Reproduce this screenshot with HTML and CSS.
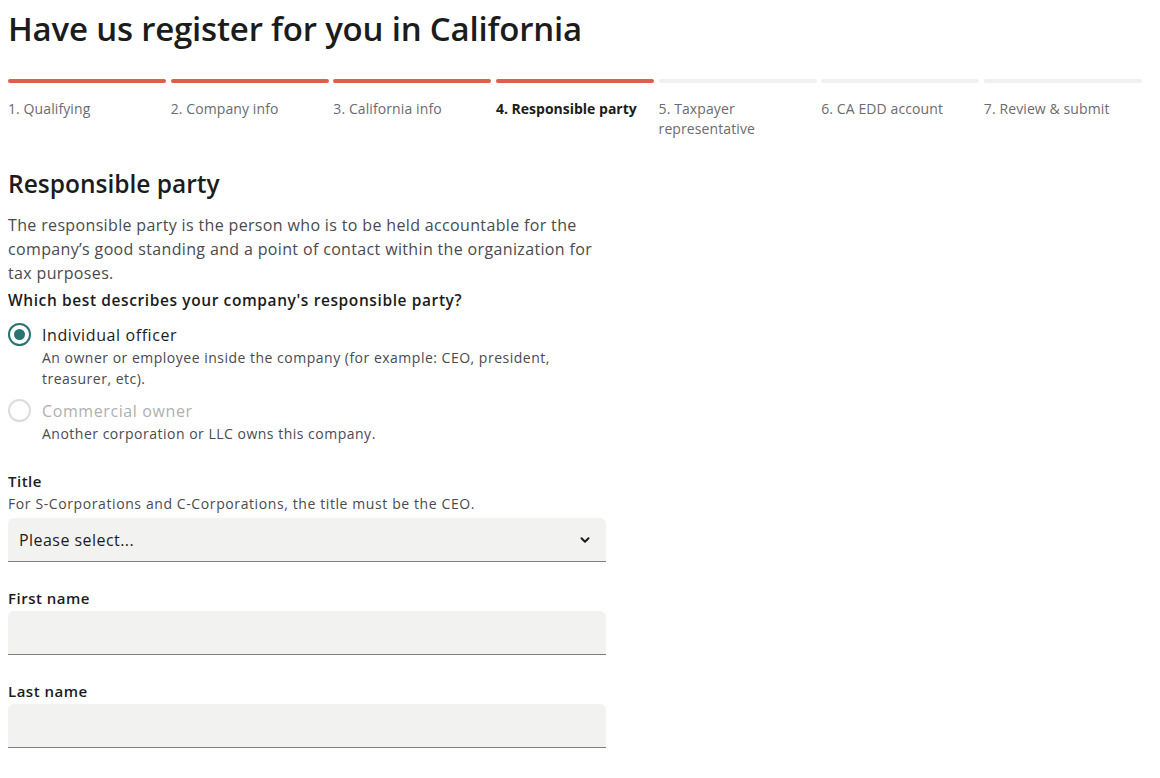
FILE: index.html
```html
<!DOCTYPE html>
<html lang="en">
<head>
<meta charset="utf-8">
<title>Have us register for you in California</title>
<link rel="stylesheet" href="styles.css">
</head>
<body>
<main class="page">
  <h1 class="title">Have us register for you in California</h1>

  <ol class="steps">
    <li class="step done"><span class="bar"></span><span class="label">1. Qualifying</span></li>
    <li class="step done"><span class="bar"></span><span class="label">2. Company info</span></li>
    <li class="step done"><span class="bar"></span><span class="label">3. California info</span></li>
    <li class="step done current"><span class="bar"></span><span class="label">4. Responsible party</span></li>
    <li class="step"><span class="bar"></span><span class="label">5. Taxpayer representative</span></li>
    <li class="step"><span class="bar"></span><span class="label">6. CA EDD account</span></li>
    <li class="step"><span class="bar"></span><span class="label">7. Review &amp; submit</span></li>
  </ol>

  <form class="form">
    <h2 class="section-title">Responsible party</h2>
    <p class="intro">The responsible party is the person who is to be held accountable for the company’s good standing and a point of contact within the organization for tax purposes.</p>

    <div class="group" role="radiogroup">
      <div class="question">Which best describes your company's responsible party?</div>
      <label class="option">
        <span class="radio checked"></span>
        <span class="option-text">
          <span class="option-label">Individual officer</span>
          <span class="option-desc">An owner or employee inside the company (for example: CEO, president, treasurer, etc).</span>
        </span>
      </label>
      <label class="option disabled">
        <span class="radio"></span>
        <span class="option-text">
          <span class="option-label">Commercial owner</span>
          <span class="option-desc">Another corporation or LLC owns this company.</span>
        </span>
      </label>
    </div>

    <div class="field">
      <div class="field-label">Title</div>
      <div class="field-help">For S-Corporations and C-Corporations, the title must be the CEO.</div>
      <div class="select">
        <span>Please select...</span>
        <svg class="chev" width="12" height="8" viewBox="0 0 12 8"><path d="M2.5 2.2l3.5 3.5 3.5-3.5" fill="none" stroke="#1c1c1c" stroke-width="2" stroke-linecap="round" stroke-linejoin="round"/></svg>
      </div>
    </div>

    <div class="field">
      <div class="field-label">First name</div>
      <div class="input"></div>
    </div>

    <div class="field">
      <div class="field-label">Last name</div>
      <div class="input"></div>
    </div>
  </form>
</main>
</body>
</html>
```

FILE: styles.css
```css
* { box-sizing: border-box; }
html, body { margin: 0; padding: 0; background: #fff; }
body {
  font-family: "Open Sans", "Noto Sans", Arial, sans-serif;
  color: #1c1c1c;
}
.page { padding: 0 8px; width: 1150px; }

.title {
  margin: 0;
  padding-top: 9px;
  font-size: 33px;
  line-height: 40px;
  font-weight: 600;
  letter-spacing: -0.2px;
  color: #1c1c1c;
}

.steps {
  list-style: none;
  margin: 30px 0 0;
  padding: 0;
  display: grid;
  grid-template-columns: repeat(7, 1fr);
  column-gap: 4.5px;
  width: 1134px;
}
.step { display: flex; flex-direction: column; }
.bar {
  display: block;
  height: 4px;
  border-radius: 2px;
  background: #f0f0ee;
}
.step.done .bar { background: #db6048; }
.label {
  margin-top: 16px;
  font-size: 14px;
  line-height: 20px;
  color: #6b6b70;
  padding-right: 20px;
  letter-spacing: 0.1px;
}
.step.current .label { color: #1c1c1c; font-weight: 700; padding-right: 0; letter-spacing: 0; }

.form { width: 598px; margin-top: 30px; }
.section-title {
  margin: 0;
  font-size: 24.5px;
  line-height: 30px;
  font-weight: 600;
  color: #1c1c1c;
}
.intro {
  margin: 14px 0 0;
  font-size: 16px;
  line-height: 24px;
  letter-spacing: 0.35px;
  color: #4a4a4f;
}
.group { margin: 0; padding: 0; }
.question {
  margin-top: 3px;
  font-size: 15.5px;
  line-height: 24px;
  font-weight: 600;
  letter-spacing: 0.6px;
  color: #1c1c1c;
}
.option { display: flex; gap: 11px; margin-top: 11px; }
.option + .option { margin-top: 10px; }
.radio {
  flex: none;
  width: 23px;
  height: 23px;
  border-radius: 50%;
  border: 2px solid #2a7373;
  position: relative;
}
.radio.checked::after {
  content: "";
  position: absolute;
  left: 4px; top: 4px;
  width: 11px; height: 11px;
  border-radius: 50%;
  background: #2a7373;
}
.option.disabled .radio { border-color: #dcdcdc; }
.option-text { display: flex; flex-direction: column; }
.option-label { font-size: 16px; line-height: 24px; letter-spacing: 0.6px; color: #1c1c1c; }
.option.disabled .option-label { color: #b0b0b0; }
.option-desc { font-size: 14px; line-height: 21px; letter-spacing: 0.5px; color: #4a4a4f; }

.field { margin-top: 27px; }
.field + .field { margin-top: 26px; }
.field-label { font-size: 15px; line-height: 20px; font-weight: 600; letter-spacing: 0.5px; color: #1c1c1c; }
.field-help { font-size: 14px; line-height: 20px; letter-spacing: 0.6px; color: #4a4a4f; margin-top: 3px; }
.select, .input {
  height: 44px;
  background: #f2f2f0;
  border-radius: 6px 6px 0 0;
  border-bottom: 1px solid #7f7f86;
}
.input { margin-top: 3px; }
.select {
  display: flex;
  align-items: center;
  justify-content: space-between;
  padding: 0 15px 0 11px;
  font-size: 16px;
  letter-spacing: 0.45px;
  color: #1c1c1c;
  margin-top: 4px;
}
.chev { display: block; }
```
